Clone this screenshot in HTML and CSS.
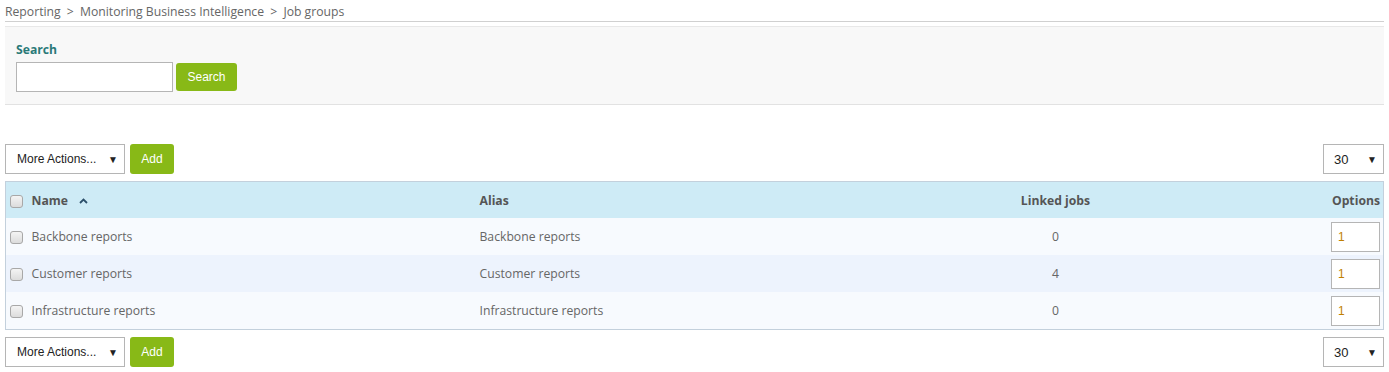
FILE: index.html
```html
<!DOCTYPE html>
<html lang="en">
<head>
    <meta charset="UTF-8">
    <title>Job groups</title>
    <link rel="stylesheet" href="styles.css">
</head>
<body>
    <div class="breadcrumb">
        <span>Reporting</span> <span class="sep">&gt;</span>
        <span>Monitoring Business Intelligence</span> <span class="sep">&gt;</span>
        <span>Job groups</span>
    </div>

    <div class="search-panel">
        <label class="search-label" for="searchInput">Search</label>
        <div class="search-row">
            <input type="text" id="searchInput" class="search-input">
            <button class="btn">Search</button>
        </div>
    </div>

    <div class="toolbar">
        <div class="toolbar-left">
            <div class="select wide">More Actions...<span class="arrow">&#9660;</span></div>
            <button class="btn tall">Add</button>
        </div>
        <div class="select narrow">30<span class="arrow">&#9660;</span></div>
    </div>

    <table class="list">
        <colgroup>
            <col style="width: 26px">
            <col style="width: 448px">
            <col style="width: 440px">
            <col style="width: 272px">
            <col>
        </colgroup>
        <thead>
            <tr>
                <th class="check"><span class="box"></span></th>
                <th>Name
                    <svg class="sort" width="9" height="6" viewBox="0 0 9 6">
                        <path d="M1 5 L4.5 1.5 L8 5" fill="none" stroke="#2c4f6a" stroke-width="1.8"/>
                    </svg>
                </th>
                <th>Alias</th>
                <th class="center">Linked jobs</th>
                <th class="right">Options</th>
            </tr>
        </thead>
        <tbody>
            <tr class="odd">
                <td class="check"><span class="box"></span></td>
                <td>Backbone reports</td>
                <td>Backbone reports</td>
                <td class="center">0</td>
                <td class="right"><span class="opt">1</span></td>
            </tr>
            <tr class="even">
                <td class="check"><span class="box"></span></td>
                <td>Customer reports</td>
                <td>Customer reports</td>
                <td class="center">4</td>
                <td class="right"><span class="opt">1</span></td>
            </tr>
            <tr class="odd">
                <td class="check"><span class="box"></span></td>
                <td>Infrastructure reports</td>
                <td>Infrastructure reports</td>
                <td class="center">0</td>
                <td class="right"><span class="opt">1</span></td>
            </tr>
        </tbody>
    </table>

    <div class="toolbar bottom">
        <div class="toolbar-left">
            <div class="select wide">More Actions...<span class="arrow">&#9660;</span></div>
            <button class="btn tall">Add</button>
        </div>
        <div class="select narrow">30<span class="arrow">&#9660;</span></div>
    </div>
</body>
</html>
```

FILE: styles.css
```css
body {
    margin: 0;
    padding: 0 5px;
    font-family: 'Open Sans', sans-serif;
    font-size: 12.2px;
    color: #666;
    background-color: #fff;
}

/* Breadcrumb */
.breadcrumb {
    color: #666;
    padding-top: 3px;
    height: 18px;
    border-bottom: 1px solid #d0d0d0;
}

.breadcrumb .sep {
    margin: 0 3px;
}

/* Search panel */
.search-panel {
    margin-top: 4px;
    background-color: #f8f8f8;
    border-top: 1px solid #e8e8e8;
    border-bottom: 1px solid #e2e2e2;
    padding: 15px 11px 10px;
    height: 52px;
}

.search-label {
    display: block;
    font-weight: bold;
    color: #2b7a78;
    line-height: 16px;
    margin-bottom: 4px;
}

.search-row {
    display: flex;
    align-items: center;
    gap: 3px;
}

.search-input {
    box-sizing: border-box;
    width: 157px;
    height: 30px;
    margin: 0;
    padding: 0 2px;
    border: 1px solid #b5b5b5;
    background-color: #fff;
}

.btn {
    font-family: 'Liberation Sans', Arial, sans-serif;
    font-size: 12px;
    color: #fff;
    background-color: #88b917;
    border: none;
    border-radius: 3px;
    height: 28px;
    width: 61px;
    padding: 0;
    cursor: pointer;
}

.btn.tall {
    height: 30px;
    width: 44px;
}

/* Toolbars */
.toolbar {
    display: flex;
    justify-content: space-between;
    align-items: center;
    margin-top: 39px;
    height: 30px;
}

.toolbar.bottom {
    margin-top: 7px;
}

.toolbar-left {
    display: flex;
    gap: 5px;
}

.select {
    box-sizing: border-box;
    height: 30px;
    border: 1px solid #b5b5b5;
    background-color: #fff;
    font-family: 'Liberation Sans', Arial, sans-serif;
    font-size: 12px;
    color: #222;
    display: flex;
    align-items: center;
    justify-content: space-between;
    padding: 0 6px 0 11px;
}

.select.wide {
    width: 120px;
}

.select.narrow {
    width: 61px;
    font-size: 13px;
    padding-left: 10px;
}

.select .arrow {
    font-size: 10px;
    color: #222;
}

/* Table */
.list {
    width: 100%;
    margin-top: 7px;
    border-collapse: collapse;
    table-layout: fixed;
    border: 1px solid #c3d0dc;
}

.list th {
    background-color: #ceebf6;
    color: #555;
    font-weight: bold;
    text-align: left;
    height: 36px;
    padding: 0;
}

.list td {
    height: 37px;
    padding: 0;
    color: #666;
}

.list tr.odd td {
    background-color: #f7fafe;
}

.list tr.even td {
    background-color: #edf3fd;
}

.list .check {
    padding-left: 4px;
}

.list .center {
    text-align: center;
}

.list .right {
    text-align: right;
    padding-right: 3px;
}

.box {
    display: inline-block;
    width: 11px;
    height: 11px;
    border: 1px solid #a8a8a8;
    border-radius: 3px;
    background: linear-gradient(#f4f4f4, #dcdcdc);
    vertical-align: middle;
}

.sort {
    margin-left: 8px;
    vertical-align: middle;
}

.opt {
    display: inline-block;
    box-sizing: border-box;
    width: 49px;
    height: 30px;
    line-height: 28px;
    text-align: left;
    padding-left: 6px;
    border: 1px solid #b5b5b5;
    background-color: #fff;
    font-family: 'Liberation Sans', Arial, sans-serif;
    font-size: 12px;
    color: #c08000;
    vertical-align: middle;
}
```
